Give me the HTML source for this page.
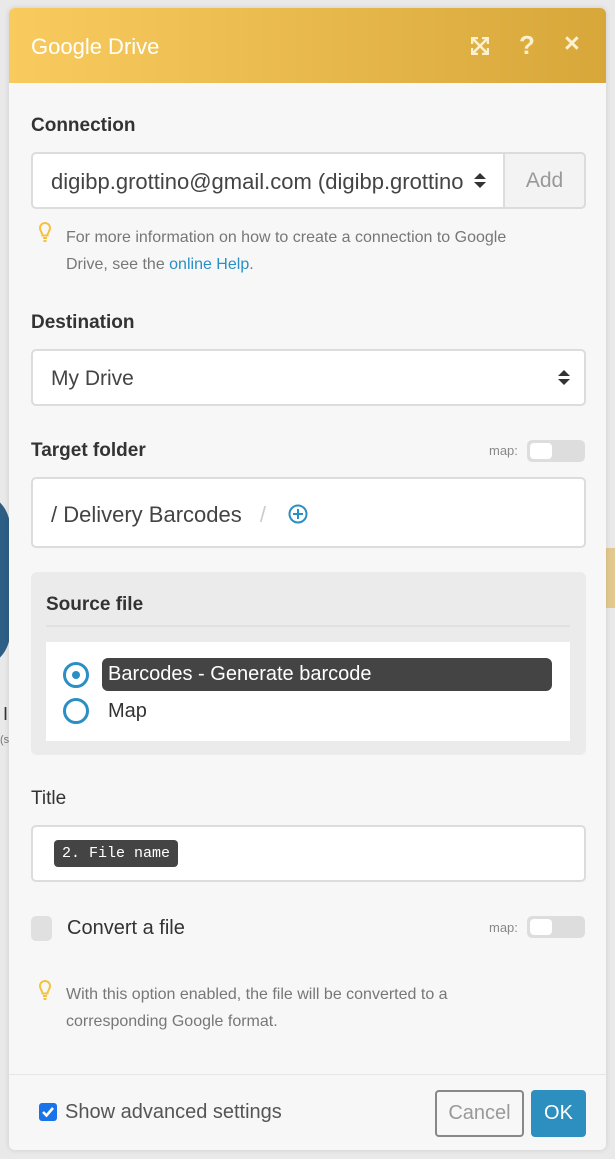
<!DOCTYPE html>
<html><head><meta charset="utf-8"><style>
*{box-sizing:border-box;margin:0;padding:0}
body{width:615px;height:1159px;background:#e9e9e9;font-family:"Liberation Sans",sans-serif;position:relative;overflow:hidden;color:#333}
.bgblue{position:absolute;left:-60px;top:492px;width:70px;height:176px;background:#2d5f86;border-radius:40px}
.bgy{position:absolute;left:606px;top:548px;width:20px;height:60px;background:#e3c98d}
.panel{position:absolute;left:9px;top:8px;width:597px;height:1142px;background:#f7f7f7;border-radius:6px;overflow:hidden;box-shadow:0 0 6px rgba(0,0,0,.12)}
.hdr{height:75px;background:linear-gradient(90deg,#f9cb5f,#d7a73a);color:#fff;position:relative}
.hdr h1{position:absolute;left:22px;top:26px;font-size:22px;font-weight:normal}
.ic{position:absolute;top:25px;color:#fbf0d0;font-weight:bold}
.abs{position:absolute}
.lbl{font-weight:bold;font-size:19px;color:#333}
.box{position:absolute;background:#fff;border:2px solid #dcdcdc;border-radius:5px}
.hint{font-size:16px;color:#777;line-height:27px}
.map{position:absolute;font-size:13px;color:#888}
.tog{position:absolute;width:58px;height:22px;background:#ddd;border-radius:5px}
.tog:after{content:"";position:absolute;left:3px;top:3px;width:22px;height:16px;background:#fff;border-radius:4px}
.arr{position:absolute;width:0;height:0;border-left:6px solid transparent;border-right:6px solid transparent}
</style></head><body>
<div class="bgblue"></div><div class="bgy"></div>
<div class="abs" style="left:3px;top:704px;font-size:18px;color:#333">I</div>
<div class="abs" style="left:0;top:734px;font-size:11px;color:#777">(s</div>
<div class="panel">
 <div class="hdr"><h1>Google Drive</h1>
  <svg class="ic" style="left:462px;top:29px" width="18" height="18" viewBox="0 0 18 18" fill="none" stroke="#fbf0d0" stroke-width="2.6"><path d="M2 2L16 16M16 2L2 16"/><path d="M1 7V1H7M11 1H17V7M17 11V17H11M7 17H1V11" stroke-width="2.4"/></svg>
  <div class="ic" style="left:510px;top:22px;font-size:26px">?</div>
  <div class="ic" style="left:555px;top:20px;font-size:27px">×</div>
 </div>
 <div class="abs lbl" style="left:22px;top:107px">Connection</div>
 <div class="box" style="left:22px;top:144px;width:555px;height:57px;background:#fff">
  <div class="abs" style="left:18px;top:15px;font-size:22px;color:#444;white-space:nowrap;width:412px;overflow:hidden">digibp.grottino@gmail.com (digibp.grottino</div>
  <div class="arr" style="left:441px;top:19px;border-bottom:6px solid #333"></div>
  <div class="arr" style="left:441px;top:28px;border-top:6px solid #333"></div>
  <div class="abs" style="left:470px;top:-2px;width:83px;height:57px;background:#f3f3f3;border:2px solid #dcdcdc;border-radius:0 5px 5px 0;font-size:21px;color:#999;text-align:center;line-height:53px">Add</div>
 </div>
 <svg class="abs" style="left:30px;top:214px" width="12" height="22" viewBox="0 0 12 22" fill="none" stroke="#f5c23f" stroke-width="2"><path d="M6 1a5 5 0 0 0-5 5c0 3 2.5 5 2.5 7.5h5C8.5 11 11 9 11 6a5 5 0 0 0-5-5z"/><path d="M4 16h4M4.5 19h3" /></svg>
 <div class="abs hint" style="left:57px;top:216px;width:520px;white-space:nowrap">For more information on how to create a connection to Google<br>Drive, see the <span style="color:#2a8fc4">online Help</span>.</div>
 <div class="abs lbl" style="left:22px;top:304px">Destination</div>
 <div class="box" style="left:22px;top:341px;width:555px;height:57px">
  <div class="abs" style="left:18px;top:16px;font-size:21px;color:#444">My Drive</div>
  <div class="arr" style="left:525px;top:19px;border-bottom:6px solid #333"></div>
  <div class="arr" style="left:525px;top:28px;border-top:6px solid #333"></div>
 </div>
 <div class="abs lbl" style="left:22px;top:432px">Target folder</div>
 <div class="map" style="left:480px;top:435px">map:</div><div class="tog" style="left:518px;top:432px"></div>
 <div class="box" style="left:22px;top:469px;width:555px;height:71px">
  <div class="abs" style="left:18px;top:23px;font-size:22px;color:#444">/ Delivery Barcodes <span style="color:#ccc;margin-left:12px">/</span></div>
  <svg class="abs" style="left:255px;top:25px" width="20" height="20" viewBox="0 0 20 20" fill="none" stroke="#2a8fc4" stroke-width="2"><circle cx="10" cy="10" r="8.5"/><path d="M10 5v10M5 10h10"/></svg>
 </div>
 <div class="abs" style="left:22px;top:564px;width:555px;height:183px;background:#ebebeb;border-radius:6px">
  <div class="abs lbl" style="left:15px;top:22px">Source file</div>
  <div class="abs" style="left:15px;top:53px;width:524px;height:2px;background:#e0e0e0"></div>
  <div class="abs" style="left:15px;top:70px;width:524px;height:99px;background:#fff">
   <div class="abs" style="left:17px;top:20px;width:26px;height:26px;border:3px solid #2a8fc4;border-radius:50%"><div style="position:absolute;left:6px;top:6px;width:8px;height:8px;border-radius:50%;background:#2a8fc4"></div></div>
   <div class="abs" style="left:56px;top:16px;width:450px;height:33px;background:#444;border-radius:6px;color:#fff;font-size:20px;line-height:33px;padding-left:6px">Barcodes - Generate barcode</div>
   <div class="abs" style="left:17px;top:56px;width:26px;height:26px;border:3px solid #2a8fc4;border-radius:50%"></div>
   <div class="abs" style="left:62px;top:58px;font-size:20px;color:#333">Map</div>
  </div>
 </div>
 <div class="abs" style="left:22px;top:780px;font-size:19px;color:#333">Title</div>
 <div class="box" style="left:22px;top:817px;width:555px;height:57px">
  <div class="abs" style="left:21px;top:13px;height:27px;background:#444;color:#fff;border-radius:4px;font-family:'Liberation Mono',monospace;font-size:15px;line-height:27px;padding:0 8px">2. File name</div>
 </div>
 <div class="abs" style="left:22px;top:908px;width:21px;height:25px;background:#e0e0e0;border-radius:5px"></div>
 <div class="abs" style="left:58px;top:909px;font-size:20px;color:#333">Convert a file</div>
 <div class="map" style="left:480px;top:912px">map:</div><div class="tog" style="left:518px;top:908px"></div>
 <svg class="abs" style="left:30px;top:972px" width="12" height="22" viewBox="0 0 12 22" fill="none" stroke="#f5c23f" stroke-width="2"><path d="M6 1a5 5 0 0 0-5 5c0 3 2.5 5 2.5 7.5h5C8.5 11 11 9 11 6a5 5 0 0 0-5-5z"/><path d="M4 16h4M4.5 19h3" /></svg>
 <div class="abs hint" style="left:57px;top:973px;width:520px;white-space:nowrap">With this option enabled, the file will be converted to a<br>corresponding Google format.</div>
 <div class="abs" style="left:0;top:1066px;width:597px;height:1px;background:#e6e6e6"></div>
 <div class="abs" style="left:30px;top:1095px;width:18px;height:18px;background:#1a73e8;border-radius:3px"><svg width="18" height="18" viewBox="0 0 18 18"><path d="M4 9l3.5 3.5L14 5" fill="none" stroke="#fff" stroke-width="2.6"/></svg></div>
 <div class="abs" style="left:56px;top:1093px;font-size:20px;color:#555">Show advanced settings</div>
 <div class="abs" style="left:426px;top:1082px;width:89px;height:47px;border:2px solid #888;border-radius:4px;font-size:20px;color:#999;text-align:center;line-height:43px">Cancel</div>
 <div class="abs" style="left:522px;top:1082px;width:55px;height:47px;background:#2d8fc0;border-radius:4px;font-size:20px;color:#fff;text-align:center;line-height:47px">OK</div>
</div>
</body></html>
